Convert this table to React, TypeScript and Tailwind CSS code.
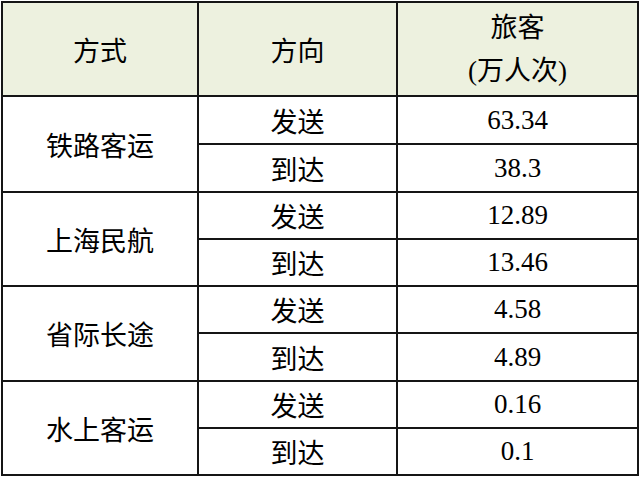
const rows = [
  { mode: "铁路客运", send: "63.34", arrive: "38.3", h: ["h-[48px]", "h-[48px]"] },
  { mode: "上海民航", send: "12.89", arrive: "13.46", h: ["h-[47px]", "h-[47px]"] },
  { mode: "省际长途", send: "4.58", arrive: "4.89", h: ["h-[47px]", "h-[48px]"] },
  { mode: "水上客运", send: "0.16", arrive: "0.1", h: ["h-[47px]", "h-[47px]"] },
];

const cjk = "font-['Noto_Sans_CJK_SC',sans-serif]";
const num = "font-['Liberation_Serif','Noto_Sans_CJK_SC',serif]";
const cell = "border-2 border-[#151515] text-center align-middle p-0 leading-none";

export default function App() {
  return (
    <div className="w-[640px] h-[477px] bg-white text-black overflow-hidden pt-px pl-px">
      <table className="border-collapse table-fixed w-[636px] text-[27px]">
        <colgroup>
          <col className="w-[196px]" />
          <col className="w-[199px]" />
          <col className="w-[241px]" />
        </colgroup>
        <thead>
          <tr className="bg-[#edf1df]">
            <th className={`${cell} ${cjk} font-normal h-[94px]`}>方式</th>
            <th className={`${cell} ${cjk} font-normal h-[94px]`}>方向</th>
            <th className={`${cell} ${cjk} font-normal h-[94px]`}>
              <div className="leading-[46px] -mt-0.5">旅客</div>
              <div className={`leading-[44px] ${num}`}>(万人次)</div>
            </th>
          </tr>
        </thead>
        <tbody>
          {rows.map((r, i) => (
            <>
              <tr key={`${i}a`}>
                <td rowSpan={2} className={`${cell} ${cjk}`}>
                  {r.mode}
                </td>
                <td className={`${cell} ${cjk} ${r.h[0]}`}>发送</td>
                <td className={`${cell} ${num} ${r.h[0]}`}>{r.send}</td>
              </tr>
              <tr key={`${i}b`}>
                <td className={`${cell} ${cjk} ${r.h[1]}`}>到达</td>
                <td className={`${cell} ${num} ${r.h[1]}`}>{r.arrive}</td>
              </tr>
            </>
          ))}
        </tbody>
      </table>
    </div>
  );
}
